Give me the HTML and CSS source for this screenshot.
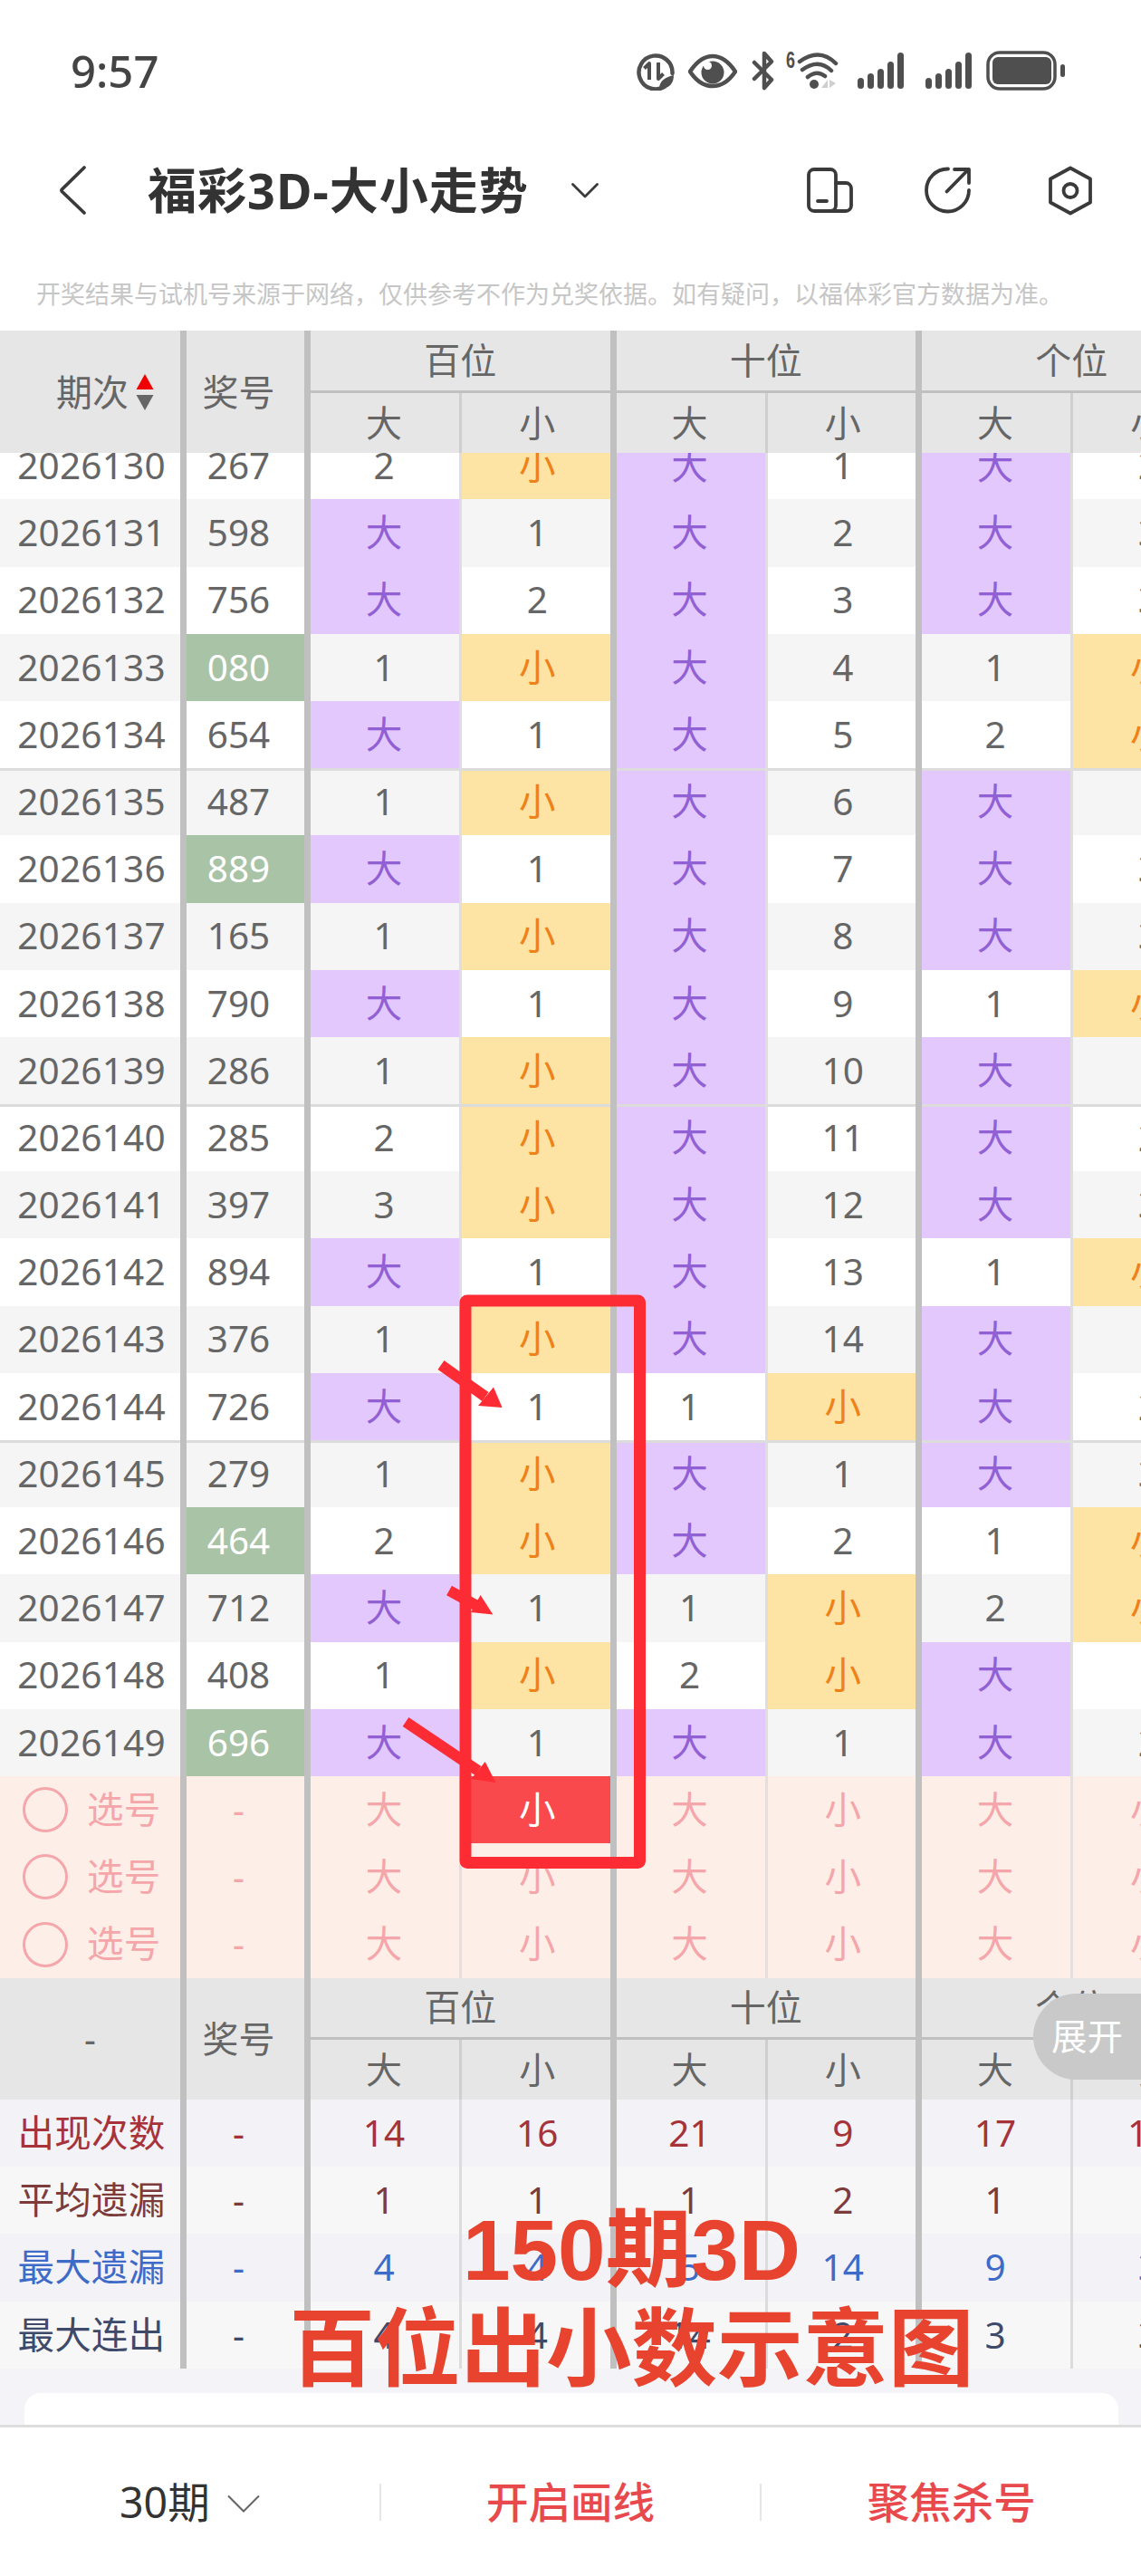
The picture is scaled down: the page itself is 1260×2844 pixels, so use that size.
FILE: index.html
```html
<!DOCTYPE html>
<html lang="zh-CN">
<head>
<meta charset="utf-8">
<title>福彩3D-大小走势</title>
<link rel="stylesheet" href="styles.css">
</head>
<body>
<div class="page">
  <header class="status">
    <div class="time">9:57</div>
    <div class="status-icons">
      <svg class="si" width="42" height="44" viewBox="0 0 42 44"><path class="st" d="M31 39.5A18.5 18.5 0 1 1 39.5 25"/><path class="st3" d="M14 32V14L8.5 19.5M24 13V31L29.5 25.5"/><path class="sf" d="M25 42C25 33 32 29 41 27C41 36 36 42 25 42Z"/></svg>
      <svg class="si" width="54" height="44" viewBox="0 0 54 44"><path class="st" d="M2 23C10 11 18 6 27 6S44 11 52 23C44 35 36 39 27 39S10 35 2 23Z"/><circle class="sf" cx="27" cy="24" r="12.5"/><circle class="sw" cx="21.5" cy="16.5" r="4.5"/></svg>
      <svg class="si" width="25" height="44" viewBox="0 0 25 44"><path class="st" d="M3 13L22 32L14 41V3L22 12L3 31"/></svg>
      <svg class="si" width="60" height="44" viewBox="0 0 60 44"><text class="six" x="0" y="19" textLength="10" lengthAdjust="spacingAndGlyphs">6</text><path class="st" d="M15 12Q37-4 55 14M18 21Q36 8 50 22M24 29Q34 21 43 28"/><circle class="sf" cx="31" cy="37" r="5"/><path class="sg" d="M46 32V41L39 41ZM48 32V41L55 36Z"/></svg>
      <svg class="si" width="52" height="44" viewBox="0 0 52 44"><rect class="sf" x="0" y="30" width="7" height="12" rx="3.5"/><rect class="sf" x="11" y="25" width="7" height="17" rx="3.5"/><rect class="sf" x="22" y="20" width="7" height="22" rx="3.5"/><rect class="sf" x="33" y="12" width="7" height="30" rx="3.5"/><rect class="sf" x="44" y="2" width="7" height="40" rx="3.5"/></svg>
      <svg class="si" width="52" height="44" viewBox="0 0 52 44"><rect class="sf" x="0" y="30" width="7" height="12" rx="3.5"/><rect class="sf" x="11" y="25" width="7" height="17" rx="3.5"/><rect class="sf" x="22" y="20" width="7" height="22" rx="3.5"/><rect class="sf" x="33" y="12" width="7" height="30" rx="3.5"/><rect class="sf" x="44" y="2" width="7" height="40" rx="3.5"/></svg>
      <svg class="si" width="88" height="44" viewBox="0 0 88 44"><rect class="sb" x="2" y="2" width="74" height="40" rx="13"/><rect class="sf" x="7" y="7" width="65" height="30" rx="6"/><rect class="sf" x="82" y="15" width="5" height="14" rx="2.5"/></svg>
    </div>
  </header>

  <nav class="nav">
    <svg class="back" width="32" height="56" viewBox="0 0 32 56"><path class="ni" d="M28 3L3.5 27Q2.500 28 3.500 29.500L28 53"/></svg>
    <h1 class="title">福彩3D-大小走势</h1>
    <svg class="caret" width="30" height="17" viewBox="0 0 30 17"><path class="nc" d="M1.500 1.500L15 15L28.500 1.500"/></svg>
    <div class="nav-icons">
      <svg width="52" height="50" viewBox="0 0 52 50"><rect class="ni" x="2" y="2" width="30" height="46" rx="6"/><path class="ni" d="M32 17H43A6 6 0 0 1 49 23V42A6 6 0 0 1 43 48H26M12 37H22"/></svg>
      <svg width="52" height="52" viewBox="0 0 52 52"><path class="ni" d="M27 2.500A23.500 23.500 0 1 0 50 26M34 3H50V18M25.500 27.500L48 4.500"/></svg>
      <svg width="50" height="55" viewBox="0 0 50 55"><path class="ni" d="M25 2.500L47 14.500V40.500L25 52.500L3 40.500V14.500Z"/><circle class="ni" cx="25" cy="27.500" r="7.500"/></svg>
    </div>
  </nav>

  <p class="notice">开奖结果与试机号来源于网络&#65292;仅供参考不作为兑奖依据。如有疑问&#65292;以福体彩官方数据为准。</p>

  <div class="thead">
    <div class="th n2 sort"><span>期次</span><svg width="20" height="40" viewBox="0 0 20 40"><polygon class="up" points="10,0 19.500,17 0.500,17"/><polygon class="down" points="0.500,23 19.500,23 10,40"/></svg></div>
    <div class="th j2">奖号</div>
    <div class="th g">百位</div><div class="th g">十位</div><div class="th g">个位</div>
    <div class="th d">大</div><div class="th x">小</div><div class="th d">大</div><div class="th x">小</div><div class="th d">大</div><div class="th x">小</div>
  </div>

  <div class="tbody">
    <div class="scroll">
      <div class="row"><div class="c n">2026130</div><div class="c j">267</div><div class="c d">2</div><div class="c x y">小</div><div class="c d p">大</div><div class="c x">1</div><div class="c d p">大</div><div class="c x">2</div></div>
      <div class="row alt"><div class="c n">2026131</div><div class="c j">598</div><div class="c d p">大</div><div class="c x">1</div><div class="c d p">大</div><div class="c x">2</div><div class="c d p">大</div><div class="c x">3</div></div>
      <div class="row"><div class="c n">2026132</div><div class="c j">756</div><div class="c d p">大</div><div class="c x">2</div><div class="c d p">大</div><div class="c x">3</div><div class="c d p">大</div><div class="c x">3</div></div>
      <div class="row alt"><div class="c n">2026133</div><div class="c j z">080</div><div class="c d">1</div><div class="c x y">小</div><div class="c d p">大</div><div class="c x">4</div><div class="c d">1</div><div class="c x y">小</div></div>
      <div class="row"><div class="c n">2026134</div><div class="c j">654</div><div class="c d p">大</div><div class="c x">1</div><div class="c d p">大</div><div class="c x">5</div><div class="c d">2</div><div class="c x y">小</div></div>
      <div class="row alt five"><div class="c n">2026135</div><div class="c j">487</div><div class="c d">1</div><div class="c x y">小</div><div class="c d p">大</div><div class="c x">6</div><div class="c d p">大</div><div class="c x">1</div></div>
      <div class="row"><div class="c n">2026136</div><div class="c j z">889</div><div class="c d p">大</div><div class="c x">1</div><div class="c d p">大</div><div class="c x">7</div><div class="c d p">大</div><div class="c x">3</div></div>
      <div class="row alt"><div class="c n">2026137</div><div class="c j">165</div><div class="c d">1</div><div class="c x y">小</div><div class="c d p">大</div><div class="c x">8</div><div class="c d p">大</div><div class="c x">3</div></div>
      <div class="row"><div class="c n">2026138</div><div class="c j">790</div><div class="c d p">大</div><div class="c x">1</div><div class="c d p">大</div><div class="c x">9</div><div class="c d">1</div><div class="c x y">小</div></div>
      <div class="row alt"><div class="c n">2026139</div><div class="c j">286</div><div class="c d">1</div><div class="c x y">小</div><div class="c d p">大</div><div class="c x">10</div><div class="c d p">大</div><div class="c x">1</div></div>
      <div class="row five"><div class="c n">2026140</div><div class="c j">285</div><div class="c d">2</div><div class="c x y">小</div><div class="c d p">大</div><div class="c x">11</div><div class="c d p">大</div><div class="c x">2</div></div>
      <div class="row alt"><div class="c n">2026141</div><div class="c j">397</div><div class="c d">3</div><div class="c x y">小</div><div class="c d p">大</div><div class="c x">12</div><div class="c d p">大</div><div class="c x">3</div></div>
      <div class="row"><div class="c n">2026142</div><div class="c j">894</div><div class="c d p">大</div><div class="c x">1</div><div class="c d p">大</div><div class="c x">13</div><div class="c d">1</div><div class="c x y">小</div></div>
      <div class="row alt"><div class="c n">2026143</div><div class="c j">376</div><div class="c d">1</div><div class="c x y">小</div><div class="c d p">大</div><div class="c x">14</div><div class="c d p">大</div><div class="c x">1</div></div>
      <div class="row"><div class="c n">2026144</div><div class="c j">726</div><div class="c d p">大</div><div class="c x">1</div><div class="c d">1</div><div class="c x y">小</div><div class="c d p">大</div><div class="c x">2</div></div>
      <div class="row alt five"><div class="c n">2026145</div><div class="c j">279</div><div class="c d">1</div><div class="c x y">小</div><div class="c d p">大</div><div class="c x">1</div><div class="c d p">大</div><div class="c x">3</div></div>
      <div class="row"><div class="c n">2026146</div><div class="c j z">464</div><div class="c d">2</div><div class="c x y">小</div><div class="c d p">大</div><div class="c x">2</div><div class="c d">1</div><div class="c x y">小</div></div>
      <div class="row alt"><div class="c n">2026147</div><div class="c j">712</div><div class="c d p">大</div><div class="c x">1</div><div class="c d">1</div><div class="c x y">小</div><div class="c d">2</div><div class="c x y">小</div></div>
      <div class="row"><div class="c n">2026148</div><div class="c j">408</div><div class="c d">1</div><div class="c x y">小</div><div class="c d">2</div><div class="c x y">小</div><div class="c d p">大</div><div class="c x">1</div></div>
      <div class="row alt"><div class="c n">2026149</div><div class="c j z">696</div><div class="c d p">大</div><div class="c x">1</div><div class="c d p">大</div><div class="c x">1</div><div class="c d p">大</div><div class="c x">2</div></div>
    </div>
  </div>

  <div class="pick">
    <div class="row"><div class="c n choose"><i class="ring"></i>选号</div><div class="c j">-</div><div class="c d">大</div><div class="c x on">小</div><div class="c d">大</div><div class="c x">小</div><div class="c d">大</div><div class="c x">小</div></div>
    <div class="row"><div class="c n choose"><i class="ring"></i>选号</div><div class="c j">-</div><div class="c d">大</div><div class="c x">小</div><div class="c d">大</div><div class="c x">小</div><div class="c d">大</div><div class="c x">小</div></div>
    <div class="row"><div class="c n choose"><i class="ring"></i>选号</div><div class="c j">-</div><div class="c d">大</div><div class="c x">小</div><div class="c d">大</div><div class="c x">小</div><div class="c d">大</div><div class="c x">小</div></div>
  </div>

  <div class="thead foot">
    <div class="th n2">-</div>
    <div class="th j2">奖号</div>
    <div class="th g">百位</div><div class="th g">十位</div><div class="th g">个位</div>
    <div class="th d">大</div><div class="th x">小</div><div class="th d">大</div><div class="th x">小</div><div class="th d">大</div><div class="th x">小</div>
  </div>

  <div class="stats">
    <div class="row s1"><div class="c n">出现次数</div><div class="c j">-</div><div class="c d">14</div><div class="c x">16</div><div class="c d">21</div><div class="c x">9</div><div class="c d">17</div><div class="c x">13</div></div>
    <div class="row s2"><div class="c n">平均遗漏</div><div class="c j">-</div><div class="c d">1</div><div class="c x">1</div><div class="c d">1</div><div class="c x">2</div><div class="c d">1</div><div class="c x">1</div></div>
    <div class="row s3"><div class="c n">最大遗漏</div><div class="c j">-</div><div class="c d">4</div><div class="c x">4</div><div class="c d">5</div><div class="c x">14</div><div class="c d">9</div><div class="c x">3</div></div>
    <div class="row s4"><div class="c n">最大连出</div><div class="c j">-</div><div class="c d">4</div><div class="c x">4</div><div class="c d">14</div><div class="c x">2</div><div class="c d">3</div><div class="c x">3</div></div>
  </div>

  <div class="tray"><div class="card"></div></div>

  <footer class="bar">
    <div class="bar-item period">30期<svg width="36" height="20" viewBox="0 0 36 20"><path class="bc" d="M1 1.500L18 18.500L35 1.500"/></svg></div>
    <i class="bar-line"></i>
    <div class="bar-item act">开启画线</div>
    <i class="bar-line"></i>
    <div class="bar-item act">聚焦杀号</div>
  </footer>

  <button class="expand">展开</button>

  <svg class="marks" width="1260" height="2844" viewBox="0 0 1260 2844">
    <rect class="frame" x="514" y="1436" width="192.500" height="620.500" rx="2"/>
    <path class="shaft" d="M487 1507L536 1542M496 1756L526 1772.500M448 1901L528 1955"/>
    <polygon class="head" points="554.600,1554 545,1531.600 528,1552"/>
    <polygon class="head" points="544.400,1782.600 530.600,1761 520,1780"/>
    <polygon class="head" points="547.400,1968 535.700,1945 520.400,1964"/>
  </svg>

  <div class="caption"><div>150期3D</div><div>百位出小数示意图</div></div>
</div>
</body>
</html>
```
FILE: styles.css
```css
* { box-sizing: border-box; }
html, body { margin: 0; padding: 0; background: #fff; }
body { font-family: "Noto Sans", "Noto Sans CJK SC", sans-serif; color: #666; }
.page { position: relative; width: 1260px; height: 2844px; overflow: hidden; display: flex; flex-direction: column; background: #fff; }

.status { height: 130px; flex: none; display: flex; justify-content: space-between; padding: 56px 83px 0 78px; }
.time { font-size: 49px; line-height: 44px; font-weight: 500; color: #444; }
.status-icons { display: flex; align-items: flex-start; }
.si { display: block; margin-left: 15px; }
.si:nth-child(3) { margin-left: 16px; }
.si:nth-child(4) { margin-left: 13px; }
.si:nth-child(5) { margin-left: 19px; }
.si:nth-child(6) { margin-left: 23px; }
.st { fill: none; stroke: #4f4f4f; stroke-width: 4.500; stroke-linecap: round; stroke-linejoin: round; }
.st3 { fill: none; stroke: #4f4f4f; stroke-width: 4; stroke-linejoin: round; }
.sf { fill: #4f4f4f; }
.sw { fill: #fff; }
.sg { fill: #cfcfcf; }
.sb { fill: none; stroke: #4f4f4f; stroke-width: 3.500; }
.six { font-family: "Liberation Sans", sans-serif; font-size: 26px; font-weight: 700; fill: #4f4f4f; }

.nav { height: 160px; flex: none; display: flex; align-items: center; padding: 0 53px 0 65px; }
.back { flex: none; }
.title { margin: 0 0 0 66px; font-size: 54px; line-height: 60px; font-weight: 700; color: #333; letter-spacing: 1px; }
.caret { flex: none; margin-left: 47px; }
.nav-icons { margin-left: auto; display: flex; align-items: center; }
.nav-icons svg { display: block; }
.nav-icons svg:nth-child(2) { margin-left: 77px; }
.nav-icons svg:nth-child(3) { margin-left: 85px; }
.ni { fill: none; stroke: #3a3a3a; stroke-width: 3.800; stroke-linecap: round; stroke-linejoin: round; }
.nc { fill: none; stroke: #3a3a3a; stroke-width: 2.800; stroke-linecap: round; stroke-linejoin: round; }

.notice { flex: none; height: 75px; margin: 0; padding: 16px 0 0 40px; font-size: 27px; line-height: 38px; color: #c6c6c6; white-space: nowrap; }

.thead, .row { display: grid; grid-template-columns: 206px 137px 167px 170.500px 167px 170.500px 167px 170.500px; width: 1355.500px; }
.thead { flex: none; height: 135px; grid-template-rows: 69px 66px; background: #e6e6e6; font-size: 40px; color: #666; }
.thead.foot { height: 134px; grid-template-rows: 68px 66px; }
.th { display: flex; align-items: center; justify-content: center; line-height: 1; }
.th.n2 { grid-row: 1 / 3; grid-column: 1; border-right: 7px solid #c0c0c0; }
.th.j2 { grid-row: 1 / 3; grid-column: 2; border-right: 7px solid #c0c0c0; padding-right: 15px; }
.th.g { grid-column: span 2; border-right: 7px solid #c0c0c0; border-bottom: 3px solid #c0c0c0; }
.th.d { border-right: 3px solid #cfcfcf; padding-right: 2px; }
.th.x { border-right: 7px solid #c0c0c0; padding-left: 3px; }
.sort { gap: 8px; padding-left: 33px; }
.sort svg { display: block; }
.up { fill: #f00000; }
.down { fill: #666; }

.tbody { flex: none; height: 1461px; overflow: hidden; }
.scroll { margin-top: -22.800px; }
.row { height: 74.200px; font-size: 40.500px; background: #fff; color: #666; }
.row.alt { background: #f5f5f5; }
.c { display: flex; align-items: center; justify-content: center; line-height: 1; white-space: nowrap; }
.c.n, .c.j, .c.x { border-right: 7px solid #c0c0c0; }
.c.n { letter-spacing: 0.2px; padding-left: 3px; }
.c.j { padding-right: 15px; }
.c.d { border-right: 3px solid #dedede; padding-right: 2px; }
.c.x { padding-left: 3px; }
.five .c { box-shadow: inset 0 3px 0 #dcdcdc; }
.c.p { background: #e2c8fd; color: #9160d4; }
.c.y { background: #fde3a4; color: #ee8118; }
.c.z { background: #a9c3a6; color: #fff; }

.pick { flex: none; background: #fdeee8; }
.pick .row { height: 74.300px; background: #fdeee8; color: #f5a6aa; }
.pick .c.d { border-right-color: #e4e0de; }
.pick .c.on { background: #fa494c; color: #fff; }
.c.n.choose { justify-content: flex-start; padding-left: 25px; gap: 21px; }
.ring { flex: none; width: 50px; height: 50px; border: 3px solid #f5a6aa; border-radius: 50%; }

.stats { flex: none; }
.stats .c.d { border-right-color: #dcdcdc; }
.stats .row { height: 74.250px; }
.s1 { --tone: #a6323a; }
.s2 { --tone: #7d3b3b; }
.s3 { --tone: #3e6ac8; }
.s4 { --tone: #3f4a6b; }
.stats .row { color: var(--tone); }
.stats .s1, .stats .s3 { background: #f2f2f7; }
.stats .s2, .stats .s4 { background: #f7f7f8; }

.tray { flex: 1; min-height: 0; background: #f4f4f8; padding: 27px 25px 0 27px; }
.card { height: 100%; background: #fff; border-radius: 18px 18px 0 0; }

.bar { flex: none; height: 167px; display: flex; align-items: center; background: #fff; border-top: 3px solid #ddd; font-size: 46.500px; }
.bar-item { flex: 1; display: flex; align-items: center; justify-content: center; line-height: 1; }
.bar-line { flex: none; width: 2px; height: 41px; background: #e6e6e6; }
.period { color: #333; gap: 19px; }
.period svg { display: block; margin-top: 4px; }
.bc { fill: none; stroke: #666; stroke-width: 2; }
.act { color: #e8494d; font-weight: 500; }

.expand { position: absolute; left: 1141px; top: 2201px; width: 140px; height: 95px; padding: 0 0 0 20px; border: 0; border-radius: 47.500px 0 0 47.500px; background: #c9c9c9; color: #fff; font: inherit; font-size: 39.500px; line-height: 1; text-align: left; }

.marks { position: absolute; left: 0; top: 0; pointer-events: none; }
.frame { fill: none; stroke: #fd2c34; stroke-width: 13; }
.shaft { fill: none; stroke: #fd2c34; stroke-width: 12; }
.head { fill: #fd2c34; }

.caption { position: absolute; left: 260px; top: 2429px; width: 875px; text-align: center; font-family: "Liberation Sans", "Noto Sans CJK SC", sans-serif; font-size: 94.500px; line-height: 110px; font-weight: 700; color: #e8432f; }
```
